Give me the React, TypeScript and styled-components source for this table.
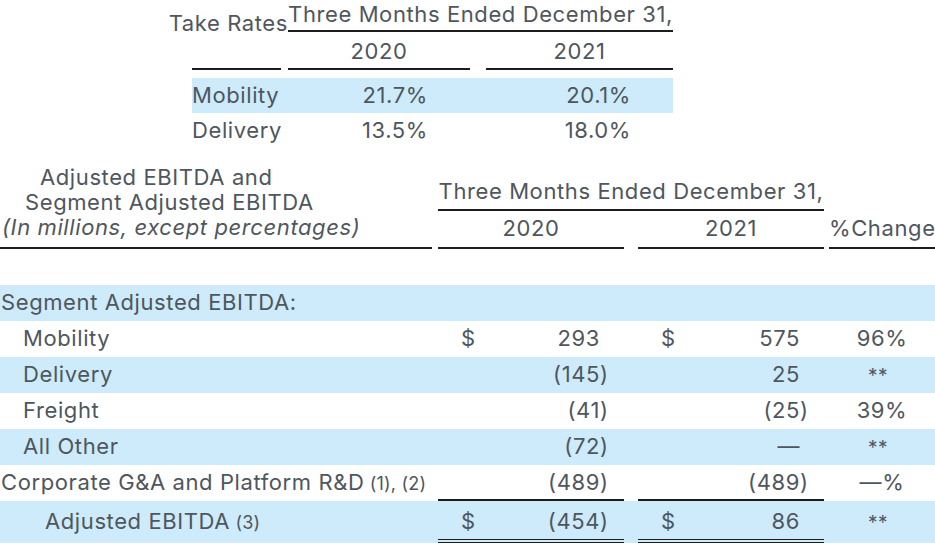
import React from 'react';
import styled, { createGlobalStyle } from 'styled-components';

const GlobalStyle = createGlobalStyle`
  body {
    margin: 0;
    background: #fff;
    font-family: Inter, "Noto Sans", sans-serif;
    color: #4f565e;
  }
`;

const SHADE = '#cdebfa';
const INK = '#1d1d1d';

const Page = styled.div`
  width: 935px;
  height: 545px;
  overflow: hidden;
  display: flex;
  flex-direction: column;
  font-size: 22px;
  letter-spacing: 0.6px;
`;

/* ---------- take rates ---------- */

const TakeTable = styled.div`
  margin-left: 192px;
  width: 481px;
  display: flex;
  flex-direction: column;
`;

const TakeRow = styled.div<{ $shade?: boolean; $h: number; $gap?: number }>`
  display: grid;
  grid-template-columns: 89px 7px 182px 16px 187px;
  height: ${p => p.$h}px;
  margin-top: ${p => p.$gap || 0}px;
  background: ${p => (p.$shade ? SHADE : 'transparent')};
`;

const Cell = styled.div<{ $col: string; $align?: string; $rule?: boolean; $end?: boolean; $pr?: number; $pt?: number; $pb?: number; $lh?: number }>`
  grid-column: ${p => p.$col};
  align-self: ${p => (p.$end ? 'end' : 'stretch')};
  box-sizing: border-box;
  text-align: ${p => p.$align || 'left'};
  padding: ${p => p.$pt || 0}px ${p => p.$pr || 0}px ${p => p.$pb || 0}px 0;
  line-height: ${p => p.$lh || 30}px;
  white-space: nowrap;
  border-bottom: ${p => (p.$rule ? `2px solid ${INK}` : 'none')};
`;

const TakeCaption = styled.div`
  grid-column: 1 / 3;
  align-self: end;
  margin-bottom: -5px;
  text-align: right;
  line-height: 28px;
  white-space: nowrap;
  direction: rtl;
`;

/* ---------- EBITDA table ---------- */

const COLS = '432px 6px 186px 14px 186px 5px 106px';

const Header = styled.div`
  margin-top: 11px;
  display: grid;
  grid-template-columns: ${COLS};
  grid-template-rows: 52px 38px;
`;

const HeadLabel = styled.div`
  grid-column: 1;
  grid-row: 1 / 3;
  display: flex;
  flex-direction: column;
  justify-content: flex-end;
  padding-bottom: 7px;
  border-bottom: 2px solid ${INK};
  line-height: 25px;
`;

const HeadLine = styled.span<{ $indent: number; $italic?: boolean }>`
  padding-left: ${p => p.$indent}px;
  font-style: ${p => (p.$italic ? 'italic' : 'normal')};
  white-space: nowrap;
`;

const HeadCell = styled.div<{ $col: string; $row: number; $align?: string }>`
  grid-column: ${p => p.$col};
  grid-row: ${p => p.$row};
  align-self: end;
  text-align: ${p => p.$align || 'center'};
  line-height: 28px;
  padding-bottom: ${p => (p.$row === 1 ? 4 : 5)}px;
  border-bottom: 2px solid ${INK};
  white-space: nowrap;
`;

const Body = styled.div`
  margin-top: 36px;
  display: flex;
  flex-direction: column;
`;

const Row = styled.div<{ $shade?: boolean; $total?: boolean }>`
  display: grid;
  grid-template-columns: ${COLS};
  height: ${p => (p.$total ? 42 : 36)}px;
  background: ${p => (p.$shade ? SHADE : 'transparent')};
`;

const Label = styled.div<{ $indent: number; $total?: boolean }>`
  grid-column: 1;
  padding-left: ${p => p.$indent}px;
  padding-top: ${p => (p.$total ? 5 : 2)}px;
  line-height: 30px;
  white-space: nowrap;
`;

const Note = styled.span`
  font-size: 18px;
  letter-spacing: 0.2px;
`;

const Amount = styled.div<{ $col: number; $rule?: 'single' | 'double'; $total?: boolean }>`
  grid-column: ${p => p.$col};
  box-sizing: border-box;
  display: flex;
  justify-content: space-between;
  padding: ${p => (p.$total ? 5 : 2)}px 15px 0 23px;
  line-height: 30px;
  border-bottom: ${p => (p.$rule === 'single' ? `2px solid ${INK}` : p.$rule === 'double' ? `4px double ${INK}` : 'none')};
`;

const Paren = styled.span`
  display: inline-block;
  width: 9px;
`;

const Change = styled.div<{ $total?: boolean; $stars?: boolean }>`
  grid-column: 7;
  text-align: center;
  padding-top: ${p => (p.$total ? 5 : 2) + (p.$stars ? 2 : 0)}px;
  padding-right: ${p => (p.$stars ? 8 : 0)}px;
  line-height: 30px;
  font-size: ${p => (p.$stars ? 19 : 22)}px;
`;

type Money = [boolean, string, boolean];

type Line = {
  label: string;
  note?: string;
  indent: number;
  shade?: boolean;
  total?: boolean;
  rule?: 'single' | 'double';
  a?: Money;
  b?: Money;
  change?: string;
};

const lines: Line[] = [
  { label: 'Segment Adjusted EBITDA:', indent: 1, shade: true },
  { label: 'Mobility', indent: 23, a: [true, '293', false], b: [true, '575', false], change: '96%' },
  { label: 'Delivery', indent: 23, shade: true, a: [false, '145', true], b: [false, '25', false], change: '**' },
  { label: 'Freight', indent: 23, a: [false, '41', true], b: [false, '25', true], change: '39%' },
  { label: 'All Other', indent: 23, shade: true, a: [false, '72', true], b: [false, '—', false], change: '**' },
  { label: 'Corporate G&A and Platform R&D', note: '(1), (2)', indent: 1, rule: 'single', a: [false, '489', true], b: [false, '489', true], change: '—%' },
  { label: 'Adjusted EBITDA', note: '(3)', indent: 45, shade: true, total: true, rule: 'double', a: [true, '454', true], b: [true, '86', false], change: '**' },
];

const AmountCell: React.FC<{ col: number; v: Money; rule?: 'single' | 'double'; total?: boolean }> = ({ col, v, rule, total }) => {
  const [dollar, num, neg] = v;
  return (
    <Amount $col={col} $rule={rule} $total={total}>
      <span>{dollar ? '$' : ''}</span>
      <span>
        {neg ? '(' : ''}
        {num}
        <Paren>{neg ? ')' : ''}</Paren>
      </span>
    </Amount>
  );
};

const App: React.FC = () => {
  return (
    <Page>
      <GlobalStyle />
      <TakeTable>
        <TakeRow $h={32}>
          <TakeCaption>Take Rates</TakeCaption>
          <Cell $col="3 / 6" $align="center" $lh={28} $pb={2} $rule $end>
            Three Months Ended December 31,
          </Cell>
        </TakeRow>
        <TakeRow $h={38}>
          <Cell $col="1" $rule />
          <Cell $col="3" $align="center" $lh={28} $pt={5} $rule>2020</Cell>
          <Cell $col="5" $align="center" $lh={28} $pt={5} $rule>2021</Cell>
        </TakeRow>
        <TakeRow $h={35} $gap={8} $shade>
          <Cell $col="1" $lh={35}>Mobility</Cell>
          <Cell $col="3" $align="right" $pr={42} $lh={35}>21.7%</Cell>
          <Cell $col="5" $align="right" $pr={42} $lh={35}>20.1%</Cell>
        </TakeRow>
        <TakeRow $h={35}>
          <Cell $col="1" $lh={35}>Delivery</Cell>
          <Cell $col="3" $align="right" $pr={42} $lh={35}>13.5%</Cell>
          <Cell $col="5" $align="right" $pr={42} $lh={35}>18.0%</Cell>
        </TakeRow>
      </TakeTable>

      <Header>
        <HeadLabel>
          <HeadLine $indent={40}>Adjusted EBITDA and</HeadLine>
          <HeadLine $indent={25}>Segment Adjusted EBITDA</HeadLine>
          <HeadLine $indent={2} $italic>(In millions, except percentages)</HeadLine>
        </HeadLabel>
        <HeadCell $col="3 / 6" $row={1}>Three Months Ended December 31,</HeadCell>
        <HeadCell $col="3" $row={2}>2020</HeadCell>
        <HeadCell $col="5" $row={2}>2021</HeadCell>
        <HeadCell $col="7" $row={2} $align="left">%Change</HeadCell>
      </Header>

      <Body>
        {lines.map(l => (
          <Row key={l.label} $shade={l.shade} $total={l.total}>
            <Label $indent={l.indent} $total={l.total}>
              {l.label}
              {l.note && <Note> {l.note}</Note>}
            </Label>
            {l.a && <AmountCell col={3} v={l.a} rule={l.rule} total={l.total} />}
            {l.b && <AmountCell col={5} v={l.b} rule={l.rule} total={l.total} />}
            {l.change && (
              <Change $total={l.total} $stars={l.change === '**'}>
                {l.change}
              </Change>
            )}
          </Row>
        ))}
      </Body>
    </Page>
  );
};

export default App;
